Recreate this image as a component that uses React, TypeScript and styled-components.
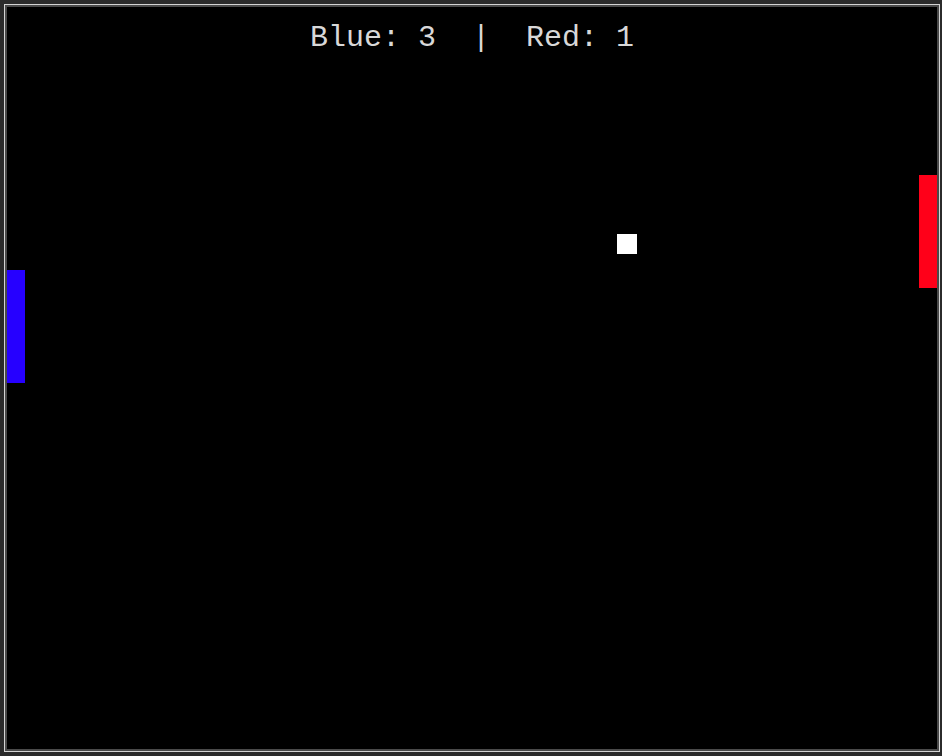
import styled, { createGlobalStyle } from 'styled-components'

const GlobalStyle = createGlobalStyle`
  html, body {
    margin: 0;
    padding: 0;
    background: #2b2b2b;
  }
  body {
    padding: 4px 0 0 4px;
    width: 942px;
    height: 756px;
    box-sizing: border-box;
    overflow: hidden;
  }
`

type PaddleProps = { $side: 'left' | 'right'; $y: number; $color: string }

const Pong = () => {
  const blueScore = 3
  const redScore = 1

  return (
    <S_Frame>
      <S_Board>
        <S_Score>
          Blue: {blueScore}&nbsp;&nbsp;|&nbsp;&nbsp;Red: {redScore}
        </S_Score>
        <S_Paddle $side='left' $y={263} $color='#2600ff' />
        <S_Paddle $side='right' $y={168} $color='#ff0019' />
        <S_Ball style={{ left: 610, top: 227 }} />
      </S_Board>
    </S_Frame>
  )
}

export default function App() {
  return (
    <>
      <GlobalStyle />
      <Pong />
    </>
  )
}

const S_Frame = styled.div`
  width: 936px;
  height: 748px;
  box-sizing: border-box;
  border: 1px solid #d4d4d4;
  background: #4a4a4a;
  padding: 2px;
`

const S_Board = styled.div`
  position: relative;
  width: 930px;
  height: 742px;
  background: #000;
  overflow: hidden;
`

const S_Score = styled.div`
  padding-top: 14px;
  text-align: center;
  font-family: "Liberation Mono", "Courier New", monospace;
  font-size: 30px;
  line-height: 34px;
  color: #d8d8d8;
`

const S_Paddle = styled.div<PaddleProps>`
  position: absolute;
  top: ${p => p.$y}px;
  ${p => (p.$side === 'left' ? 'left: 0;' : 'right: 0;')}
  width: 18px;
  height: 113px;
  background: ${p => p.$color};
`

const S_Ball = styled.div`
  position: absolute;
  width: 20px;
  height: 20px;
  background: #fff;
`
